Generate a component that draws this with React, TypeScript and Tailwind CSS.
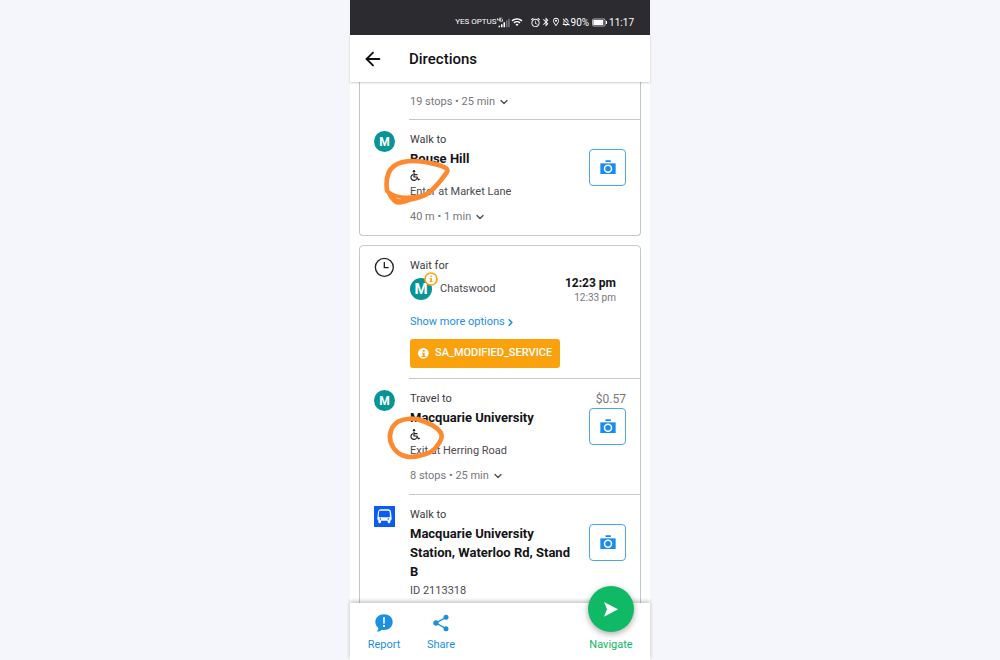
import type { ReactNode } from 'react'
import { ArrowLeft, ChevronDown, ChevronRight } from 'lucide-react'
import { MdAlarm, MdBluetooth, MdOutlineLocationOn, MdOutlineNotificationsOff, MdWifi } from 'react-icons/md'

function CameraButton() {
  return (
    <button
      type="button"
      aria-label="Photos"
      className="flex h-[37px] w-[37px] items-center justify-center rounded-[4px] border border-[#4ba6ea] bg-white text-[#1a8cf0]"
    >
      <svg width="16" height="15" viewBox="0 0 48 45" fill="currentColor">
        <rect x="16" y="1" width="17" height="5" rx="2" />
        <path d="M1 10h46v32H1z" />
        <circle cx="24" cy="26" r="10.5" fill="none" stroke="#fff" strokeWidth="4.5" />
      </svg>
    </button>
  )
}

function MetroBadge() {
  return (
    <span className="flex h-[21px] w-[21px] items-center justify-center rounded-full bg-[#069496] text-[12px] font-bold text-white">
      M
    </span>
  )
}

function BusBadge() {
  return (
    <svg width="21" height="21" viewBox="0 0 63 63">
      <rect width="63" height="63" fill="#0b5cf5" />
      <path d="M20 10h22q8 0 9 8l2 20q0 6-6 6H16q-6 0-6-6l2-20q1-8 8-8z" fill="#fff" />
      <path d="M19 14h24q4 0 4 4l1 13q0 3-3 3H17q-3 0-3-3l1-13q0-4 4-4z" fill="#0b5cf5" />
      <circle cx="19" cy="39" r="2.5" fill="#0b5cf5" />
      <circle cx="43" cy="39" r="2.5" fill="#0b5cf5" />
      <path d="M13 43h8v5q0 4-4 4t-4-4zM41 43h8v5q0 4-4 4t-4-4z" fill="#fff" />
    </svg>
  )
}

function WheelchairIcon() {
  return (
    <svg width="10" height="11" viewBox="0 0 30 33" fill="none" stroke="#222226" strokeWidth="3.5" strokeLinecap="round">
      <circle cx="12" cy="3.5" r="3.5" fill="#222226" stroke="none" />
      <path d="M12 9v12h9l4 8 3-1M13 14h8" />
      <path d="M8 14a9 9 0 1 0 12 12" />
    </svg>
  )
}

function Duration({ children }: { children: ReactNode }) {
  return (
    <button type="button" className="flex items-center gap-[3px] text-[11px] leading-4 text-[#77777b]">
      {children}
      <ChevronDown size={12} strokeWidth={2.5} className="text-[#4a4a4e]" />
    </button>
  )
}

interface StepProps {
  icon: ReactNode
  action: string
  place: string
  detail: string
  accessible?: boolean
  duration?: string
  price?: string
  marker?: ReactNode
}

function Step({ icon, action, place, detail, accessible, duration, price, marker }: StepProps) {
  return (
    <li className="relative flex pl-[14px]">
      <div className="w-[35px] shrink-0 pt-3">{icon}</div>
      <div className="flex flex-1 gap-2 border-t border-[#c4c6ca] pt-[11px] pr-[14px] pb-[10px]">
        <div className="flex-1 pl-px">
          <p className="text-[11px] leading-[18px] text-[#3a3a3e]">{action}</p>
          <h2 className="text-[13px] leading-[19px] font-bold text-[#141418]">{place}</h2>
          {accessible && (
            <div className="flex h-[14px] items-center">
              <WheelchairIcon />
            </div>
          )}
          <p className="text-[11px] leading-5 text-[#4b4b4f]">{detail}</p>
          {duration && (
            <div className="mt-[7px]">
              <Duration>{duration}</Duration>
            </div>
          )}
        </div>
        <div className="flex w-[37px] flex-col items-end">
          <p className="h-[18px] text-[12px] leading-[18px] text-[#77777b]">{price}</p>
          <CameraButton />
        </div>
      </div>
      {marker}
    </li>
  )
}

function RouseHillMarker() {
  return (
    <svg className="pointer-events-none absolute top-[37px] left-6" width="68" height="51" viewBox="102 108 204 153">
      <path
        d="M111 212C107 180 113 152 132 138C148 126 166 123 190 123C218 123 264 133 284 142Q296 148 290 158C274 180 252 209 232 221C208 235 184 238 166 240"
        fill="none"
        stroke="#fd8a30"
        strokeWidth="14"
        strokeLinecap="round"
      />
      <path d="M105 208L118 211C136 225 156 228 180 226Q214 225 232 216Q216 234 188 242Q156 258 136 253Q116 240 105 208z" fill="#fd8a30" />
      <path d="M139 234l9 2l5 4" fill="none" stroke="#ffc79a" strokeWidth="2" />
    </svg>
  )
}

function MacquarieMarker() {
  return (
    <svg className="pointer-events-none absolute top-[36px] left-[26px]" width="60" height="48" viewBox="108 114 180 144">
      <path
        d="M212 132C194 126 164 127 146 136C125 148 115 174 122 198C130 222 150 240 178 243C210 243 244 232 258 214C270 200 278 186 274 174C266 154 232 138 206 131"
        fill="none"
        stroke="#fd8a30"
        strokeWidth="14"
        strokeLinecap="round"
      />
    </svg>
  )
}

function StatusBar() {
  return (
    <div className="flex h-[35px] shrink-0 items-end justify-end bg-[#2b2b30] pr-4 pb-[6px] text-white">
      <div className="flex h-[14px] items-center text-[10px]">
        <span className="text-[8px]">YES OPTUS</span>
        <svg width="13" height="11" viewBox="0 0 42 33" fill="currentColor">
          <path d="M2 2v5h5V1h2v12H7V9H0V2zM17 3h-5v8h5V8h-2V6h4v7h-9V1h7z" />
          <path d="M5 27h5v5H5zM13 22h5v10h-5zM21 16h5v16h-5z" />
          <path d="M29 10h5v22h-5zM36 4h5v28h-5z" opacity="0.35" />
        </svg>
        <MdWifi size={12} className="ml-px" />
        <MdAlarm size={11} className="ml-[7px]" />
        <MdBluetooth size={10} />
        <MdOutlineLocationOn size={10} />
        <MdOutlineNotificationsOff size={10} />
        <span>90%</span>
        <svg className="ml-[3px]" width="15" height="9" viewBox="0 0 45 27">
          <rect x="1.5" y="3" width="38" height="21" rx="4" fill="none" stroke="currentColor" strokeWidth="2" />
          <rect x="4" y="6" width="30" height="15" fill="currentColor" />
          <path d="M42 9h3v9h-3z" fill="currentColor" />
        </svg>
        <span className="ml-[2px]">11:17</span>
      </div>
    </div>
  )
}

function WaitStep() {
  return (
    <li className="flex pl-[14px]">
      <div className="w-[35px] shrink-0 pt-[11px]">
        <svg width="21" height="21" viewBox="0 0 63 63" fill="none" stroke="#222228" strokeWidth="4">
          <circle cx="31" cy="31" r="27" />
          <path d="M31 15v17h13" />
        </svg>
      </div>
      <div className="flex flex-1 justify-between pt-[11px] pr-6 pb-[10px]">
        <div className="pl-px">
          <p className="text-[11px] leading-[18px] text-[#3a3a3e]">Wait for</p>
          <div className="mt-[3px] flex h-[22px] items-center gap-2">
            <span className="relative flex h-[22px] w-[22px] items-center justify-center rounded-full bg-[#069496] text-[15px] font-bold text-white">
              M
              <svg className="absolute -top-[6px] left-[14px]" width="14" height="14" viewBox="0 0 42 42">
                <circle cx="21" cy="21" r="18" fill="#fff" stroke="#f9a61a" strokeWidth="5" />
                <path d="M19 11h5v4h-5zM17 18h7v10h2v3h-9v-3h2v-7h-2z" fill="#f9a61a" />
              </svg>
            </span>
            <span className="text-[11px] text-[#4b4b4f]">Chatswood</span>
          </div>
          <a href="#options" className="mt-[13px] flex items-center text-[11px] leading-[18px] text-[#1a8fe3]">
            Show more options
            <ChevronRight size={11} strokeWidth={3.5} />
          </a>
          <button
            type="button"
            className="mt-2 flex h-[29px] items-center gap-[6px] rounded-[3px] bg-[#f9a20d] px-2 text-[11px] font-medium text-white"
          >
            <svg width="11" height="11" viewBox="0 0 33 33">
              <circle cx="16" cy="16" r="16" fill="#fff" />
              <path d="M14 6h6v5h-6zM12 14h8v10h3v3H11v-3h3v-7h-2z" fill="#f9a20d" />
            </svg>
            SA_MODIFIED_SERVICE
          </button>
        </div>
        <div className="mt-[18px] text-right">
          <p className="text-[12px] leading-4 font-bold text-[#141418]">12:23 pm</p>
          <p className="text-[10px] leading-[13px] text-[#77777b]">12:33 pm</p>
        </div>
      </div>
    </li>
  )
}

export default function App() {
  return (
    <div className="flex h-screen justify-center bg-[#f4f6fc] font-[Roboto,'Liberation_Sans',sans-serif]">
      <div className="flex w-full max-w-[300px] flex-col bg-white">
        <StatusBar />
        <header className="relative z-10 flex h-[47px] shrink-0 items-center gap-[25px] bg-white pt-px pl-3 shadow-[0_1px_2px_rgba(0,0,0,0.2)]">
          <button type="button" aria-label="Back" className="text-[#111114]">
            <ArrowLeft size={22} strokeWidth={2} />
          </button>
          <h1 className="text-[15px] font-medium text-[#111114]">Directions</h1>
        </header>

        <main className="flex-1 overflow-hidden px-[9px]">
          <ul className="rounded-b-[4px] border border-t-0 border-[#c4c6ca]">
            <li className="pt-3 pb-[9px] pl-[50px]">
              <Duration>19 stops • 25 min</Duration>
            </li>
            <Step
              icon={<MetroBadge />}
              action="Walk to"
              place="Rouse Hill"
              detail="Enter at Market Lane"
              accessible
              duration="40 m • 1 min"
              marker={<RouseHillMarker />}
            />
          </ul>

          <ul className="mt-[9px] rounded-t-[4px] border border-[#c4c6ca]">
            <WaitStep />
            <Step
              icon={<MetroBadge />}
              action="Travel to"
              place="Macquarie University"
              detail="Exit at Herring Road"
              accessible
              duration="8 stops • 25 min"
              price="$0.57"
              marker={<MacquarieMarker />}
            />
            <Step
              icon={<BusBadge />}
              action="Walk to"
              place="Macquarie University Station, Waterloo Rd, Stand B"
              detail="ID 2113318"
            />
          </ul>
        </main>

        <nav className="relative z-10 flex shrink-0 items-end gap-[17px] bg-white pr-[15px] pb-[7px] pl-[14px] text-[11px] leading-4 text-[#1a8fe3] shadow-[0_-2px_4px_rgba(0,0,0,0.22)]">
          <button type="button" className="flex w-10 flex-col items-center gap-[5px] pt-[11px]">
            <svg width="18" height="18" viewBox="0 0 54 54" fill="currentColor">
              <path d="M27 1C12 1 1 11 1 24c0 8 4 14 9 18 0 5-2 8-5 11 7 0 12-3 16-6 2 1 4 1 6 1 15 0 26-10 26-24S42 1 27 1z" />
              <path d="M24 10h6l-1 19h-4zM24 33h6v6h-6z" fill="#fff" />
            </svg>
            Report
          </button>
          <button type="button" className="flex w-10 flex-col items-center gap-[5px] pt-[11px]">
            <svg width="18" height="18" viewBox="0 0 54 54" fill="currentColor">
              <path d="M42 10L12 27l30 17" fill="none" stroke="currentColor" strokeWidth="4" />
              <circle cx="42" cy="10" r="7.5" />
              <circle cx="12" cy="27" r="8" />
              <circle cx="42" cy="44" r="7.5" />
            </svg>
            Share
          </button>
          <button type="button" className="-mt-[17px] ml-auto flex w-12 flex-col items-center gap-[5px] text-[#0fb765]">
            <span className="flex h-[46px] w-[46px] items-center justify-center rounded-full bg-[#0fb966] shadow-[0_2px_6px_rgba(0,0,0,0.35)]">
              <svg width="14" height="15" viewBox="0 0 42 45" fill="#fff">
                <path d="M0 0l42 22L0 44l9-22z" />
              </svg>
            </span>
            Navigate
          </button>
        </nav>
      </div>
    </div>
  )
}
